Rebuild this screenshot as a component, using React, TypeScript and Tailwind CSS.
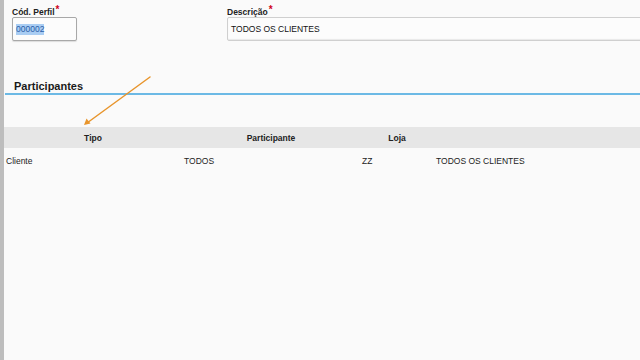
import React from "react";

const font = { fontFamily: '"Liberation Sans", Arial, sans-serif' };

function Label({ text }: { text: string }) {
  return (
    <div className="flex h-[10px] items-end text-[8.5px] font-bold leading-[10px] text-[#222]">
      {text}
      <span className="relative -top-[2px] ml-[1px] text-[10px] leading-none text-[#d0021b]">*</span>
    </div>
  );
}

const columns = [
  { title: "Tipo", value: "Cliente" },
  { title: "Participante", value: "TODOS" },
  { title: "Loja", value: "ZZ" },
  { title: "", value: "TODOS OS CLIENTES" },
];

export default function App() {
  return (
    <div
      className="relative flex h-[360px] w-[640px] overflow-hidden bg-[#fafafa] text-[#222]"
      style={font}
    >
      <div className="h-full w-[4px] shrink-0 bg-[#bdbdbd]" />

      <main className="flex min-w-0 flex-1 flex-col">
        {/* form */}
        <div className="flex pt-[7px]">
          <div className="ml-[8px] w-[65px] shrink-0">
            <Label text="Cód. Perfil" />
            <div className="flex h-[24px] items-center rounded-[2px] border border-[#a8a8a8] bg-[#fcfcfc] px-[3px] shadow-[0_1px_1px_rgba(0,0,0,0.12)]">
              <span className="bg-[#a9cdf3] text-[8.5px] leading-[11px] text-[#2a5ea8]">000002</span>
            </div>
          </div>
          <div className="ml-[150px] w-[420px] shrink-0">
            <Label text="Descrição" />
            <div className="flex h-[24px] items-center rounded-[2px] border border-[#cfcfcf] bg-[#fcfcfc] px-[3px] shadow-[inset_0_-1px_1px_rgba(0,0,0,0.08)]">
              <span className="text-[8.5px] leading-[11px] text-[#111]">TODOS OS CLIENTES</span>
            </div>
          </div>
        </div>

        {/* section */}
        <div className="ml-[1px] mt-[38px] pl-[9px]">
          <h2 className="text-[11px] font-bold leading-[14px] text-[#1a1a1a]">Participantes</h2>
        </div>
        <div className="ml-[1px] h-[2px] bg-[#6cb9e5]" />

        {/* table */}
        <div className="mt-[32px]">
          <div className="grid h-[21px] grid-cols-[178px_178px_74px_1fr] items-center bg-[#e6e6e6] pt-[2px] text-[8.5px] font-bold">
            {columns.map((c, i) => (
              <div key={i} className="text-center">
                {c.title}
              </div>
            ))}
          </div>
          <div className="grid h-[25px] grid-cols-[178px_178px_74px_1fr] items-center pt-[2px] text-[8.5px]">
            {columns.map((c, i) => (
              <div key={i} className="pl-[2px]">
                {c.value}
              </div>
            ))}
          </div>
        </div>
      </main>

      {/* annotation arrow */}
      <svg
        className="pointer-events-none absolute left-0 top-0"
        width="640"
        height="360"
        viewBox="0 0 640 360"
      >
        <line x1="150" y1="77" x2="87" y2="123" stroke="#e8952c" strokeWidth="1.5" strokeLinecap="round" />
        <path d="M84 125 L86.5 118.5 L90.5 123.5 Z" fill="#e8952c" />
      </svg>
    </div>
  );
}
